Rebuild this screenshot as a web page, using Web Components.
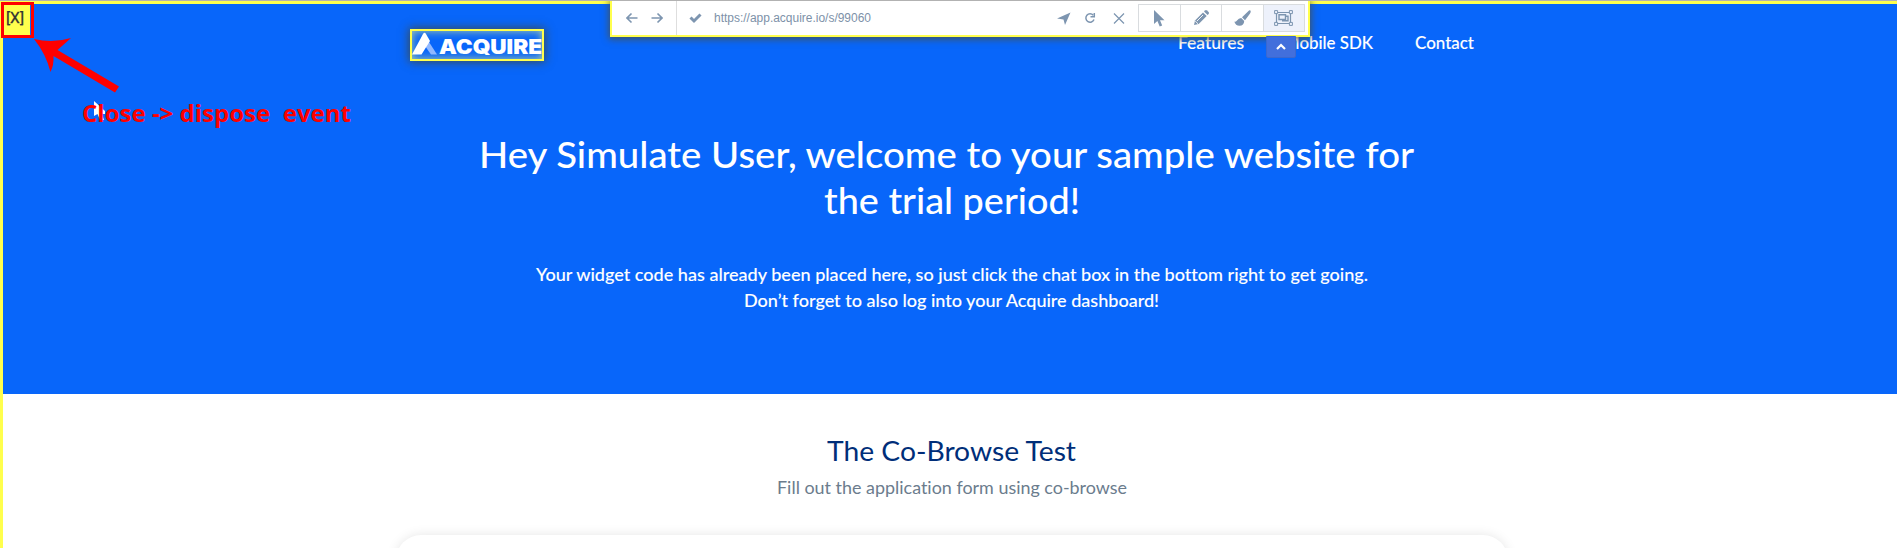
<!DOCTYPE html>
<html lang="en">
<head>
<meta charset="utf-8">
<title>Acquire co-browse</title>
<style>
html,body{margin:0;height:548px;overflow:hidden;background:#fff;font-family:Lato,"Open Sans",sans-serif;font-variant-ligatures:none}
</style>
</head>
<body>
<browse-page></browse-page>
<script>
const define=(name,html,ready)=>customElements.define(name,class extends HTMLElement{
  constructor(){super();this.attachShadow({mode:'open'}).innerHTML=html;}
  connectedCallback(){if(ready)ready(this);}
});

/* One line of text, stretched so that it spans the width given in "span". */
define('fit-line',`<style>:host{display:block;white-space:pre;flex:none}span{display:inline-block;transform-origin:0 50%}</style><span><slot></slot></span>`,el=>{
  const s=el.shadowRoot.querySelector('span');
  const target=+el.getAttribute('span');
  const w=s.getBoundingClientRect().width;
  s.style.transform='scaleX('+(target/w)+')';
  el.style.width=target+'px';
});

define('acquire-logo',`<style>
:host{display:flex;box-sizing:border-box;width:134px;height:32px;border:2px solid #ffff4d;box-shadow:0 0 9px 1px rgba(70,70,50,.85),inset 0 0 8px rgba(225,240,140,.8);align-items:flex-start}
svg{display:block;margin-top:1px;flex:none}
fit-line{font:900 20.5px/24px Inter,sans-serif;color:#fff;margin:4px 0 0 1px}
</style>
<svg width="26" height="24" viewBox="0 0 26 24"><path d="M12 3 17 10 25 22.500H19L13 14Z" fill="#90b8ff"/><path d="M0 22.500 11 2Q12.500-.5 14 2L18 9 9.500 22.500Z" fill="#fff"/></svg>
<fit-line span="103">ACQUIRE</fit-line>`);

define('site-nav',`<style>
:host{display:flex;height:82px;padding:25px 0 0 407px;box-sizing:border-box;align-items:flex-start;color:#fff;font-size:16.5px;font-weight:500;line-height:24px;-webkit-text-stroke:.1px #fff}
fit-line{margin-top:2px}
.a{margin-left:634px}.b{margin-left:40px}.c{margin-left:42px}
</style>
<acquire-logo></acquire-logo><fit-line class="a" span="66">Features</fit-line><fit-line class="b" span="89">Mobile SDK</fit-line><fit-line class="c" span="59">Contact</fit-line>`);

define('hero-panel',`<style>
:host{display:block;height:390px;background:#0866fa;color:#fff}
.t{display:flex;flex-direction:column;align-items:center;padding-left:3px;font-weight:500}
.h{font-size:36px;line-height:46px}
.h.one{margin:45px 10px 0 0}
.p{font-size:17px;line-height:26px;-webkit-text-stroke:.1px #fff}.p.one{margin-top:39px}
</style>
<site-nav></site-nav>
<div class="t"><fit-line class="h one" span="935">Hey Simulate User, welcome to your sample website for</fit-line>
<fit-line class="h" span="256">the trial period!</fit-line>
<fit-line class="p one" span="832">Your widget code has already been placed here, so just click the chat box in the bottom right to get going.</fit-line>
<fit-line class="p" span="415">Don’t forget to also log into your Acquire dashboard!</fit-line></div>`);

define('form-section',`<style>
:host{display:flex;flex-direction:column;align-items:center;padding:39px 0 0 3px;background:#fff}
.h{font-size:27px;line-height:36px;color:#002e79}
.p{font-size:17px;line-height:26px;color:#6b7c8d;margin-top:6px}
.card{width:1112px;height:100px;box-sizing:border-box;margin-top:34px;border-radius:25px;background:#fff;box-shadow:0 0 12px rgba(0,0,0,.1);flex:none}
</style>
<fit-line class="h" span="249">The Co-Browse Test</fit-line>
<fit-line class="p" span="350">Fill out the application form using co-browse</fit-line>
<div class="card"></div>`);

define('tool-bar',`<style>
:host{display:flex;position:absolute;left:610px;top:1px;width:700px;height:36px;box-sizing:border-box;border:solid #ffff4d;border-width:0 2px 2px;background:#fff;box-shadow:0 1px 7px 1px rgba(80,80,60,.85);clip-path:inset(0 -12px -12px -12px);color:#7d95b0}
svg{display:block;flex:none}
.nav{display:flex;border-right:1px solid #dedede;padding:11px 0 0 14px;box-sizing:content-box;width:50px;gap:13px}
.check{margin:11px 0 0 12px}
fit-line{font:12px/16px "Liberation Sans",Arial,sans-serif;margin:9px 0 0 12px;color:#7d91a8}
.acts{display:flex;margin:11px 0 0 auto;gap:13px}
.acts svg:last-child{margin-left:2px}
.tools{display:flex;box-sizing:border-box;width:167px;height:28px;margin:3px 3px 0 13px;border:1px solid #d9dcdf}
.tools div{flex:1;display:flex;align-items:center;justify-content:center;border-left:1px solid #d9dcdf}
.tools div:first-child{border:0}.tools .on{background:#edf1fb}
</style>
<div class="nav">
<svg width="12" height="12" viewBox="0 0 12 12" fill="none" stroke="currentColor" stroke-width="1.600"><path d="M11.500 6H1M5.500 1.500 1 6l4.500 4.500"/></svg>
<svg width="12" height="12" viewBox="0 0 12 12" fill="none" stroke="currentColor" stroke-width="1.600"><path d="M.5 6H11M6.500 1.500 11 6l-4.500 4.500"/></svg></div>
<svg class="check" width="13" height="12" viewBox="0 0 13 12"><path d="m1.500 5.500 3.500 3.500 6.500-6.500" fill="none" stroke="currentColor" stroke-width="3"/></svg>
<fit-line span="157">https://app.acquire.io/s/99060</fit-line>
<div class="acts">
<svg width="14" height="14" viewBox="0 0 14 14"><path d="M13.500.5 8 13 6.500 7.500 0 6.500Z" fill="currentColor"/></svg>
<svg width="12" height="13" viewBox="0 0 12 13" fill="none" stroke="currentColor" stroke-width="1.500"><path d="M9.300 3.300A4.200 4.200 0 1 0 10 7.500"/><path d="M10.300 1v3.800H6.500"/></svg>
<svg width="14" height="13" viewBox="0 0 14 13" fill="none" stroke="currentColor" stroke-width="1.200"><path d="m3 1.500 10 10M13 1.500l-10 10"/></svg>
</div>
<div class="tools">
<div><svg width="12" height="17" viewBox="0 0 12 17"><path d="M1 0v14l3.400-3L6.700 16.500 9.200 15.400 7 10.200H11.500Z" fill="currentColor"/></svg></div>
<div><svg width="16" height="16" viewBox="0 0 16 16"><path d="m1 15 1-4.600L10 2.400l3.700 3.700-8 8Z" fill="currentColor"/><path d="m11 1.500 1-1q1-.8 2 0l1.600 1.600q.8 1 0 2l-1 1Z" fill="currentColor"/><path d="m2.200 11 2.800 2.800M4 11l6-6" stroke="#fff" stroke-width=".9"/></svg></div>
<div><svg width="17" height="16" viewBox="0 0 17 16" fill="currentColor"><path d="M16.400.5Q17.300 1.500 15.700 4L11 10.200 8 7.300 14 1.400Q15.600-.2 16.400.5Z"/><path d="M7.200 8 10.200 11Q10 15.800 5.500 15.800 1.500 15.600.3 11.400 2 12.200 3 10.500 4.600 8 7.200 8Z"/></svg></div>
<div class="on"><svg width="19" height="16" viewBox="0 0 19 16" fill="none" stroke="currentColor"><path stroke-width="1.200" d="M2.500 2.500h14v11h-14z"/><path fill="#edf1fb" d="M.6.6h3v3h-3zM15.400.6h3v3h-3zM.6 12.400h3v3h-3zM15.400 12.400h3v3h-3z"/><path stroke-width="1.400" d="M8 10.800h6V6.300H12"/><path stroke-width="1.400" d="M5 4.800h6.500v4.700H5z"/></svg></div>
</div>`);

define('collapse-tab',`<style>
:host{position:absolute;left:1266px;top:36px;width:30px;height:22px;box-sizing:border-box;background:#426fdc;border:1px solid #3b68cf;border-radius:0 0 2px 2px;display:flex;align-items:center;justify-content:center}
</style><svg width="12" height="8" viewBox="0 0 12 8"><path d="m2 6 4-4 4 4" fill="none" stroke="#fff" stroke-width="2.200"/></svg>`);

define('close-box',`<style>
:host{position:absolute;left:1px;top:2px;width:33px;height:36px;box-sizing:border-box;border:3px solid #fe0000;background:linear-gradient(90deg,#ffff4d 26px,#0866fa 26px);display:block;color:#333}
fit-line{font:15px/20px Roboto,"Liberation Sans",sans-serif;margin:3px 0 0 2px;-webkit-text-stroke:.3px #333}
</style><fit-line span="18">[X]</fit-line>`);

/* Red arrow, note and mouse pointer drawn over the page. */
define('note-overlay',`<style>
:host{position:absolute;left:0;top:0;width:380px;height:140px}
svg{position:absolute;left:0;top:0}
fit-line{position:absolute;left:82px;top:97px;font:700 24px/32px "Open Sans","Noto Sans",sans-serif;color:#fe0000}
</style>
<svg width="380" height="140"><path d="M94 101v15l3.500-2 2.500 6h4l-2-6h3v-3Z" fill="#fff"/><path d="M34 39Q53 43.500 71 38L57.500 50 119 86.500 115 92.500 53.500 56Q54 65 50.500 72 46 54 34 39Z" fill="#fe0000"/></svg>
<fit-line span="269">Close -&gt; dispose  event</fit-line>`);

define('browse-page',`<style>
:host{display:block;position:relative;box-sizing:border-box;width:1897px;height:548px;overflow:hidden;border-top:1px solid #b2b2b2}
.frame{box-sizing:border-box;height:547px;border:solid #ffff4d;border-width:3px 0 0 3px;overflow:hidden}
.over{position:absolute;left:0;top:-1px}
</style>
<div class="frame"><hero-panel></hero-panel><form-section></form-section></div>
<div class="over"><tool-bar></tool-bar><collapse-tab></collapse-tab><close-box></close-box><note-overlay></note-overlay></div>`);
</script>
</body>
</html>
